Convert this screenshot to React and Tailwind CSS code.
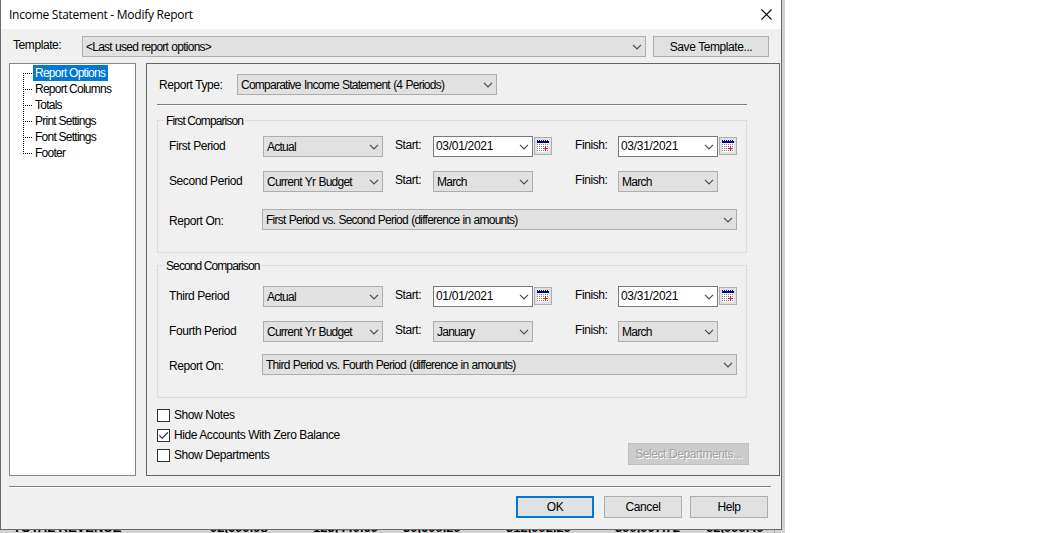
import React from "react";

const TREE_ITEMS = [
  "Report Options",
  "Report Columns",
  "Totals",
  "Print Settings",
  "Font Settings",
  "Footer",
];

const TOTALS = [
  { value: "TOTAL REVENUE", cell: "w-[210px] pl-[13px]" },
  { value: "92,699.98", cell: "w-[103px]" },
  { value: "123,440.69", cell: "w-[90px]" },
  { value: "30,609.29", cell: "w-[103px]" },
  { value: "312,092.29", cell: "w-[109px]" },
  { value: "399,907.72", cell: "w-[91px]" },
  { value: "62,999.49", cell: "w-[69px] border-r border-[#a0a0a0]" },
];

const Chevron = () => (
  <svg width="10" height="6" viewBox="0 0 10 6" className="shrink-0">
    <path d="M1 0.8 L5 4.8 L9 0.8" fill="none" stroke="#4a4a4a" strokeWidth="1.2" />
  </svg>
);

const Combo = ({ value, width, editable = false }) => (
  <div
    className={`flex h-[21px] shrink-0 items-center justify-between border pr-[3px] ${
      editable
        ? "border-[#7a7a7a] bg-white pl-[2px] tracking-[-0.3px]"
        : "border-[#adadad] bg-[#e1e1e1] pl-[3px] tracking-[-0.75px] [word-spacing:0.6px]"
    } ${width}`}
  >
    <span className={`leading-[19px] ${editable ? "" : "pt-px"}`}>{value}</span>
    <Chevron />
  </div>
);

const CalendarButton = () => (
  <button className="ml-px mt-px flex size-[18px] shrink-0 items-center justify-center border border-[#adadad] bg-[#e1e1e1]">
    <svg width="14" height="14" viewBox="0 0 14 14" className="shrink-0" shapeRendering="crispEdges">
      <rect x="1" y="1" width="12" height="12" fill="#fff" />
      <path d="M1 1.5 H13" stroke="#0000a0" strokeDasharray="1 1" />
      <rect x="1" y="2" width="12" height="2" fill="#000080" />
      <path
        d="M1 5.5 H13 M1 7.5 H13 M1 9.5 H13 M1 11.5 H13"
        stroke="#808080"
        strokeDasharray="1 1"
      />
      <path d="M7 9.5 H12 M9.5 7 V12" stroke="#d02020" />
    </svg>
  </button>
);

const PeriodRow = ({ label, source, start, finish, dates = false }) => (
  <div className="flex h-[21px]">
    <span className="w-[94px] shrink-0 leading-5">{label}</span>
    <Combo value={source} width="w-[120px]" />
    <span className="ml-3 w-[38px] shrink-0 leading-[18px]">Start:</span>
    <Combo value={start} width="w-[100px]" editable={dates} />
    <div className="w-[42px] shrink-0">{dates && <CalendarButton />}</div>
    <span className="w-[43px] shrink-0 leading-[18px]">Finish:</span>
    <Combo value={finish} width="w-[100px]" editable={dates} />
    {dates && <CalendarButton />}
  </div>
);

const Comparison = ({ title, children, reportOn, rowsMargin, reportMargin }) => (
  <section className="h-[133px] w-[590px] border border-[#dcdcdc] pl-[11px]">
    <div className="-ml-[5px] -mt-2 flex">
      <span className="h-4 bg-[#f0f0f0] px-[2px] leading-4 tracking-[-0.9px]">{title}</span>
    </div>
    <div className={`flex flex-col gap-[14px] ${rowsMargin}`}>{children}</div>
    <div className={`flex ${reportMargin}`}>
      <span className="w-[93px] shrink-0 leading-6">Report On:</span>
      <Combo value={reportOn} width="w-[475px]" />
    </div>
  </section>
);

const Check = ({ label, checked = false }) => (
  <label className="flex h-5 items-center">
    <span className="flex size-[13px] items-center justify-center border border-[#333] bg-white">
      {checked && (
        <svg width="11" height="11" viewBox="0 0 11 11" className="shrink-0">
          <path d="M1.3 5.3 L4.2 8.2 L9.8 2.5" fill="none" stroke="#333" strokeWidth="1.2" />
        </svg>
      )}
    </span>
    <span className="ml-1">{label}</span>
  </label>
);

const Button = ({ children, className }) => (
  <button
    className={`flex items-center justify-center bg-[#e1e1e1] ${className}`}
  >
    {children}
  </button>
);

export default function App() {
  return (
    <div className="h-[533px] w-[1063px] overflow-hidden whitespace-nowrap bg-white font-['Liberation_Sans',sans-serif] text-[12px] tracking-[-0.42px] text-black">
      <div className="flex h-[530px]">
        <div className="h-[530px] w-[782px] border-x border-b border-[#6b6b6b] bg-[#f0f0f0]">
          <header className="flex h-[29px] items-center justify-between bg-white pl-2 pr-[9px]">
            <h1 className="font-['Open_Sans',sans-serif] text-[12px] tracking-[-0.26px]">
              Income Statement - Modify Report
            </h1>
            <svg width="11" height="11" viewBox="0 0 11 11">
              <path d="M0.5 0.5 L10.5 10.5 M10.5 0.5 L0.5 10.5" stroke="#000" strokeWidth="1.1" />
            </svg>
          </header>

          <div className="mt-[7px] flex">
            <span className="w-[69px] shrink-0 pl-3 leading-[18px]">Template:</span>
            <div className="ml-3">
              <Combo value="<Last used report options>" width="w-[564px]" />
            </div>
            <Button className="ml-[7px] h-[21px] w-[116px] border border-[#adadad]">
              Save Template...
            </Button>
          </div>

          <div className="mt-[6px] flex pl-2">
            <nav className="h-[413px] w-[127px] border border-[#828790] bg-white pl-[13px] pt-px tracking-[-0.75px]">
              {TREE_ITEMS.map((item, i) => (
                <div key={item} className="flex h-4">
                  <div className="w-[10px]">
                    <svg width="10" height="16" viewBox="0 0 10 16" shapeRendering="crispEdges">
                      <path
                        d={
                          i === 0
                            ? "M0.5 8 V16"
                            : i === TREE_ITEMS.length - 1
                              ? "M0.5 0 V8"
                              : "M0.5 0 V16"
                        }
                        stroke="#000"
                        strokeDasharray="1 1"
                      />
                      <path d="M0 8.5 H9" stroke="#000" strokeDasharray="1 1" />
                    </svg>
                  </div>
                  <span
                    className={`px-[2px] leading-4 ${i === 0 ? "bg-[#0078d7] pr-[3px] text-white" : ""}`}
                  >
                    {item}
                  </span>
                </div>
              ))}
            </nav>

            <main className="ml-[10px] h-[413px] w-[634px] border border-[#646464] pl-[10px] pt-[10px]">
              <div className="flex">
                <span className="w-20 shrink-0 pl-[2px] leading-[22px]">Report Type:</span>
                <Combo value="Comparative Income Statement (4 Periods)" width="w-[260px]" />
              </div>
              <div className="mb-[14px] mt-2 h-[2px] w-[590px] border-b border-t border-b-white border-t-[#808080]" />

              <Comparison
                title="First Comparison"
                rowsMargin="mt-[7px]"
                reportMargin="mt-[17px]"
                reportOn="First Period vs. Second Period (difference in amounts)"
              >
                <PeriodRow
                  label="First Period"
                  source="Actual"
                  start="03/01/2021"
                  finish="03/31/2021"
                  dates
                />
                <PeriodRow
                  label="Second Period"
                  source="Current Yr Budget"
                  start="March"
                  finish="March"
                />
              </Comparison>
              <div className="h-3" />
              <Comparison
                title="Second Comparison"
                rowsMargin="mt-3"
                reportMargin="mt-3"
                reportOn="Third Period vs. Fourth Period (difference in amounts)"
              >
                <PeriodRow
                  label="Third Period"
                  source="Actual"
                  start="01/01/2021"
                  finish="03/31/2021"
                  dates
                />
                <PeriodRow
                  label="Fourth Period"
                  source="Current Yr Budget"
                  start="January"
                  finish="March"
                />
              </Comparison>

              <div className="flex items-end justify-between pr-[30px] pt-[7px]">
                <div>
                  <Check label="Show Notes" />
                  <Check label="Hide Accounts With Zero Balance" checked />
                  <Check label="Show Departments" />
                </div>
                <button
                  disabled
                  className="h-[22px] w-[121px] border border-[#bfbfbf] bg-[#cccccc] text-[#a0a0a0] [text-shadow:1px_1px_0_#fff]"
                >
                  Select Departments...
                </button>
              </div>
            </main>
          </div>

          <div className="ml-2 mt-[10px] h-[2px] w-[762px] border-b border-t border-b-white border-t-[#808080]" />
          <footer className="mt-2 flex pl-[515px]">
            <Button className="h-[22px] w-[78px] border-2 border-[#0078d7]">OK</Button>
            <Button className="ml-[10px] h-[22px] w-[78px] border border-[#adadad]">Cancel</Button>
            <Button className="ml-2 h-[22px] w-[78px] border border-[#adadad]">Help</Button>
          </footer>
        </div>
        <div className="w-[3px] bg-[#d0d0d0]" />
      </div>

      <div className="flex h-[3px] w-[785px] items-end overflow-hidden bg-[#d2d2d2] text-[13px] font-bold leading-[10px] tracking-normal">
        {TOTALS.map(({ value, cell }) => (
          <span key={value} className={`shrink-0 ${cell}`}>
            {value}
          </span>
        ))}
      </div>
    </div>
  );
}
